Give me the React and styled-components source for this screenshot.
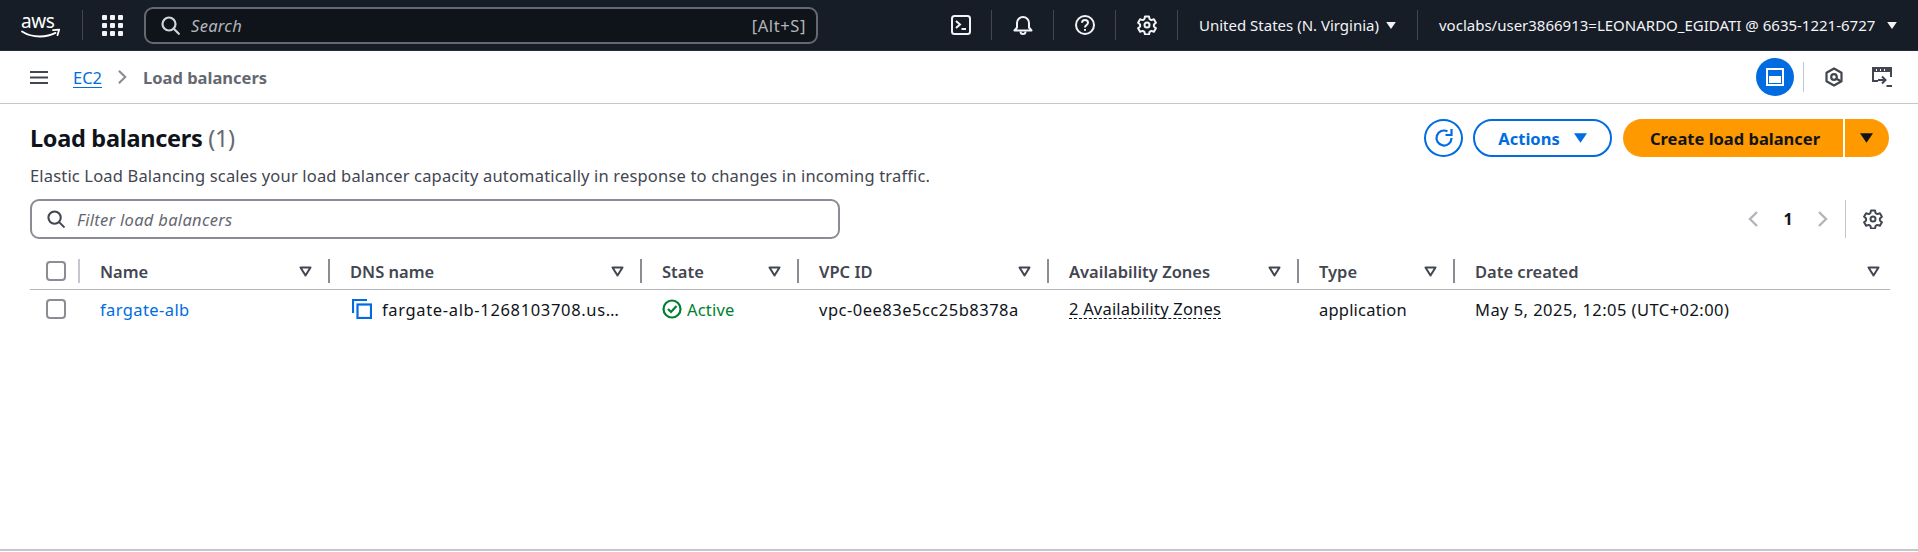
import React from "react";
import styled, { createGlobalStyle } from "styled-components";

const FONT = `"Noto Sans", "Open Sans", sans-serif`;
const COLUMNS = "50px 250px 312px 157px 250px 250px 156px 435px";

const GlobalStyle = createGlobalStyle`
  html, body {
    margin: 0;
    padding: 0;
    background: #fff;
  }
  * {
    box-sizing: border-box;
  }
`;

const Page = styled.div`
  display: flex;
  flex-direction: column;
  height: 552px;
  overflow: hidden;
  font-family: ${FONT};
  font-size: 16.5px;
  color: #0f141a;
`;

const TopNav = styled.header`
  display: flex;
  align-items: center;
  height: 51px;
  flex: none;
  background: #161d26;
  border-bottom: 1px solid #232b37;
  color: #fff;
`;

const LogoLink = styled.div`
  display: flex;
  align-items: center;
  width: 83px;
  height: 30px;
  padding-left: 21px;
  border-right: 1px solid #424650;
`;

const GridButton = styled.div`
  display: grid;
  grid-template-columns: repeat(3, 5px);
  grid-auto-rows: 5px;
  gap: 3px;
  margin: 0 21px 0 19px;
`;

const GridDot = styled.span`
  background: #f3f3f7;
  border-radius: 1px;
`;

const SearchBox = styled.div`
  display: flex;
  align-items: center;
  width: 674px;
  height: 37px;
  padding: 0 10px 0 15px;
  background: #0f141a;
  border: 2px solid #656871;
  border-radius: 9px;
`;

const SearchText = styled.span`
  margin-left: 11px;
  font-style: italic;
  font-size: 16.5px;
  letter-spacing: 0.3px;
  color: #b4b4bb;
`;

const Shortcut = styled.span`
  margin-left: auto;
  font-size: 16.5px;
  letter-spacing: 0.6px;
  color: #b4b4bb;
`;

const NavRight = styled.div`
  display: flex;
  align-items: center;
  margin-left: auto;
`;

const NavIcon = styled.div`
  display: flex;
  align-items: center;
  justify-content: center;
  width: 62px;
  height: 30px;
  border-right: 1px solid #424650;
`;

const NavMenu = styled.div`
  display: flex;
  align-items: center;
  justify-content: space-between;
  width: ${(p) => p.$width}px;
  height: 30px;
  padding: 0 21px 0 21px;
  font-size: 15px;
  color: #f3f3f7;
  white-space: nowrap;
  border-right: ${(p) => (p.$last ? "none" : "1px solid #424650")};
`;

const SubBar = styled.div`
  display: flex;
  align-items: center;
  height: 53px;
  flex: none;
  padding: 0 25px 0 30px;
  border-bottom: 1px solid #c6c6cd;
`;

const Crumbs = styled.nav`
  display: flex;
  align-items: center;
  margin-left: 25px;
`;

const CrumbLink = styled.a`
  color: #006ce0;
  font-size: 16.5px;
  text-decoration: underline;
  text-underline-offset: 3px;
`;

const CrumbChevron = styled.span`
  display: flex;
  margin: 0 15px;
`;

const CrumbCurrent = styled.span`
  color: #656871;
  font-size: 16.5px;
  font-weight: 700;
`;

const SubTools = styled.div`
  display: flex;
  align-items: center;
  margin-left: auto;
`;

const ActiveTool = styled.div`
  display: flex;
  align-items: center;
  justify-content: center;
  width: 38px;
  height: 38px;
  border-radius: 50%;
  background: #006ce0;
`;

const ToolDivider = styled.div`
  width: 1px;
  height: 30px;
  margin: 0 20px 0 9px;
  background: #c6c6cd;
`;

const Tool = styled.div`
  display: flex;
  margin-right: ${(p) => p.$gap || 0}px;
`;

const Content = styled.main`
  flex: 1;
  padding: 15px 28px 0 30px;
`;

const TitleRow = styled.div`
  display: flex;
  align-items: center;
  justify-content: space-between;
  height: 38px;
  margin-right: 1px;
`;

const Title = styled.h1`
  margin: 0;
  font-size: 23.5px;
  font-weight: 700;
  letter-spacing: -0.3px;
`;

const Count = styled.span`
  font-weight: 400;
  color: #656871;
`;

const Actions = styled.div`
  display: flex;
  align-items: center;
  gap: 10px;
`;

const RoundButton = styled.button`
  display: flex;
  align-items: center;
  justify-content: center;
  width: 39px;
  height: 38px;
  padding: 0;
  background: #fff;
  border: 2px solid #006ce0;
  border-radius: 50%;
`;

const OutlineButton = styled.button`
  display: flex;
  align-items: center;
  justify-content: center;
  gap: 14px;
  width: 139px;
  height: 38px;
  font: 700 16.5px ${FONT};
  color: #006ce0;
  background: #fff;
  border: 2px solid #006ce0;
  border-radius: 20px;
`;

const SplitButton = styled.div`
  display: flex;
  height: 38px;
  gap: 2px;
  margin-left: 1px;
`;

const PrimaryButton = styled.button`
  width: 220px;
  padding-left: 10px;
  font: 700 16.5px ${FONT};
  color: #0f141a;
  background: #ff9900;
  border: none;
  border-radius: 20px 0 0 20px;
`;

const CaretButton = styled.button`
  display: flex;
  align-items: center;
  justify-content: center;
  width: 44px;
  padding: 0 2px 0 0;
  background: #ff9900;
  border: none;
  border-radius: 0 20px 20px 0;
`;

const Description = styled.p`
  margin: 7px 0 0;
  line-height: 23px;
  font-size: 16.5px;
  letter-spacing: 0.17px;
  color: #424650;
`;

const FilterRow = styled.div`
  display: flex;
  align-items: center;
  justify-content: space-between;
  margin-top: 12px;
`;

const FilterBox = styled.div`
  display: flex;
  align-items: center;
  gap: 12px;
  width: 810px;
  height: 40px;
  padding: 0 15px;
  border: 2px solid #8c8c94;
  border-radius: 9px;
`;

const FilterText = styled.span`
  font-style: italic;
  font-size: 16.5px;
  letter-spacing: 0.3px;
  color: #656871;
`;

const Pager = styled.div`
  display: flex;
  align-items: center;
  padding-right: 7px;
`;

const PageNumber = styled.span`
  width: 58px;
  text-align: center;
  font-size: 16px;
  font-weight: 700;
`;

const PagerDivider = styled.div`
  width: 1px;
  height: 38px;
  margin: 0 17px 0 16px;
  background: #c6c6cd;
`;

const HeadRow = styled.div`
  display: grid;
  grid-template-columns: ${COLUMNS};
  align-items: center;
  height: 37px;
  margin-top: 14px;
  border-bottom: 1px solid #b4b4bb;
`;

const HeadCell = styled.div`
  display: flex;
  align-items: center;
  justify-content: space-between;
  height: 24px;
  padding: 0 ${(p) => (p.$last ? 10 : 16)}px 0 20px;
  font-size: 16.5px;
  font-weight: 600;
  color: #424650;
  border-right: ${(p) => (p.$last ? "none" : "2px solid #8c8c94")};
`;

const CheckCell = styled.div`
  display: flex;
  align-items: center;
  height: 24px;
  padding-left: 16px;
  border-right: ${(p) => (p.$head ? "2px solid #c6c6cd" : "none")};
`;

const Checkbox = styled.span`
  width: 20px;
  height: 20px;
  border: 2px solid #8c8c94;
  border-radius: 4px;
`;

const BodyRow = styled.div`
  display: grid;
  grid-template-columns: ${COLUMNS};
  align-items: center;
  height: 38px;
`;

const BodyCell = styled.div`
  display: flex;
  align-items: center;
  gap: ${(p) => p.$gap || 0}px;
  min-width: 0;
  padding-left: ${(p) => p.$left || 20}px;
  font-size: 16.5px;
  letter-spacing: ${(p) => p.$track || 0.2}px;
  white-space: nowrap;
  color: ${(p) => p.$color || "#0f141a"};
`;

const DottedText = styled.span`
  border-bottom: 1px dashed #0f141a;
  line-height: 19px;
`;

const BottomRule = styled.div`
  flex: none;
  height: 3px;
  border-top: 2px solid #c6c6cd;
  background: #fff;
`;

const AwsLogo = () => (
  <svg width="42" height="37" viewBox="0 -6 42 37" style={{ flex: "none" }}>
    <text x="0" y="14.5" fontFamily={FONT} fontSize="19" fill="#fff" letterSpacing="-0.4">aws</text>
    <path d="M1 18.5c5.500 3.600 11.500 5 18 5 5.500 0 11-1.200 15.500-3.600" fill="none" stroke="#fff" strokeWidth="1.800" strokeLinecap="round" />
    <path d="M32 17.200l6.200-.6-1.700 5.600" fill="none" stroke="#fff" strokeWidth="1.800" strokeLinecap="round" strokeLinejoin="round" />
  </svg>
);

const SearchIcon = ({ color, size = 19 }) => (
  <svg width={size} height={size} viewBox="0 0 19 19" fill="none" stroke={color} strokeWidth="2.200">
    <circle cx="8" cy="8" r="6.500" />
    <path d="M12.800 12.800l5 5" strokeLinecap="round" />
  </svg>
);

const Gear = ({ color, size = 20 }) => (
  <svg width={size} height={size} viewBox="0 0 20 20" fill="none" stroke={color} strokeWidth="2" strokeLinejoin="round">
    <path d="M8 1.500h4l.6 2.600 1.700 1 2.600-.8 2 3.400-2 1.800v2l2 1.800-2 3.400-2.600-.8-1.700 1-.6 2.600H8l-.6-2.600-1.700-1-2.600.8-2-3.400 2-1.800v-2l-2-1.800 2-3.400 2.600.8 1.700-1z" />
    <circle cx="10" cy="10" r="2.500" />
  </svg>
);

const Caret = ({ color, w = 11, h = 8 }) => (
  <svg width={w} height={h} viewBox="0 0 11 8" style={{ flex: "none" }}>
    <path d="M0 0h11L5.500 8z" fill={color} />
  </svg>
);

const SortIcon = () => (
  <svg width="13" height="11" viewBox="0 0 13 11" fill="none" stroke="#424650" strokeWidth="2" strokeLinejoin="round">
    <path d="M1.500 1.500h10L6.500 9.500z" />
  </svg>
);

const Chevron = ({ dir, color, w = 12, h = 20 }) => (
  <svg width={w} height={h} viewBox="0 0 12 20" fill="none" stroke={color} strokeWidth="2.400">
    <path d={dir === "left" ? "M10 3L3 10l7 7" : "M2 3l7 7-7 7"} />
  </svg>
);

const columns = ["Name", "DNS name", "State", "VPC ID", "Availability Zones", "Type", "Date created"];

export default function App() {
  return (
    <Page>
      <GlobalStyle />
      <TopNav>
        <LogoLink>
          <AwsLogo />
        </LogoLink>
        <GridButton>
          {Array.from({ length: 9 }).map((_, i) => (
            <GridDot key={i} />
          ))}
        </GridButton>
        <SearchBox>
          <SearchIcon color="#d1d5db" />
          <SearchText>Search</SearchText>
          <Shortcut>[Alt+S]</Shortcut>
        </SearchBox>
        <NavRight>
          <NavIcon>
            <svg width="20" height="20" viewBox="0 0 20 20" fill="none" stroke="#f3f3f7" strokeWidth="2">
              <rect x="1" y="1" width="18" height="18" rx="2.500" />
              <path d="M5 6l4 3.500L5 13M10.500 14H15" />
            </svg>
          </NavIcon>
          <NavIcon>
            <svg width="20" height="20" viewBox="0 0 20 20" fill="none" stroke="#f3f3f7" strokeWidth="2" strokeLinejoin="round">
              <path d="M1.500 15.500h17l-2.500-3V8a6 6 0 0 0-12 0v4.500z" />
              <path d="M7.500 16.500c0 1.500 1 2.500 2.500 2.500s2.500-1 2.500-2.500" />
            </svg>
          </NavIcon>
          <NavIcon>
            <svg width="20" height="20" viewBox="0 0 20 20" fill="none" stroke="#f3f3f7" strokeWidth="2">
              <circle cx="10" cy="10" r="9" />
              <path d="M7 7.800C7 6 8.300 5 10 5s3 1.100 3 2.700c0 2.300-3 2.300-3 4.800" />
              <path d="M10 14v1.800" />
            </svg>
          </NavIcon>
          <NavIcon>
            <Gear color="#f3f3f7" />
          </NavIcon>
          <NavMenu $width={240}>
            United States (N. Virginia)
            <Caret color="#f3f3f7" w={10} h={7} />
          </NavMenu>
          <NavMenu $last $width={500}>
            voclabs/user3866913=LEONARDO_EGIDATI @ 6635-1221-6727
            <Caret color="#f3f3f7" w={10} h={7} />
          </NavMenu>
        </NavRight>
      </TopNav>

      <SubBar>
        <svg width="18" height="15" viewBox="0 0 18 15" fill="none" stroke="#424650" strokeWidth="2.200">
          <path d="M0 2h18M0 7.500h18M0 13h18" />
        </svg>
        <Crumbs>
          <CrumbLink>EC2</CrumbLink>
          <CrumbChevron>
            <Chevron dir="right" color="#8c8c94" w={11} h={18} />
          </CrumbChevron>
          <CrumbCurrent>Load balancers</CrumbCurrent>
        </Crumbs>
        <SubTools>
          <ActiveTool>
            <svg width="20" height="20" viewBox="0 0 20 20" fill="none" stroke="#fff" strokeWidth="2">
              <rect x="2" y="2" width="16" height="16" />
              <rect x="4" y="9" width="12" height="7" fill="#fff" stroke="none" />
            </svg>
          </ActiveTool>
          <ToolDivider />
          <Tool $gap={27}>
            <svg width="20" height="20" viewBox="0 0 20 20" fill="none" stroke="#424650" strokeWidth="2.200" strokeLinejoin="round">
              <path d="M10 1.500l7.500 4.200v8.600L10 18.500l-7.500-4.200V5.700z" />
              <circle cx="10" cy="10" r="2.800" />
              <path d="M12 11.500l4.500 2.500" />
            </svg>
          </Tool>
          <Tool>
            <svg width="22" height="22" viewBox="0 0 22 22" fill="none" stroke="#424650" strokeWidth="2">
              <path d="M7 15H2V2h18v9" />
              <path d="M2 3h18v3H2z" fill="#424650" stroke="none" />
              <path d="M5 4h1M9 4h1M13 4h1" stroke="#fff" />
              <path d="M7 14h7M11 10.500L14.500 14 11 17.500M15.500 20H21" />
            </svg>
          </Tool>
        </SubTools>
      </SubBar>

      <Content>
        <TitleRow>
          <Title>
            Load balancers <Count>(1)</Count>
          </Title>
          <Actions>
            <RoundButton>
              <svg width="22" height="22" viewBox="0 0 22 22" fill="none" stroke="#006ce0" strokeWidth="2.200">
                <path d="M18.500 11A7.500 7.500 0 1 1 14.500 4.400" />
                <path d="M18.500 2v6h-6" />
              </svg>
            </RoundButton>
            <OutlineButton>
              Actions
              <Caret color="#006ce0" w={13} h={10} />
            </OutlineButton>
            <SplitButton>
              <PrimaryButton>Create load balancer</PrimaryButton>
              <CaretButton>
                <Caret color="#0f141a" w={13} h={10} />
              </CaretButton>
            </SplitButton>
          </Actions>
        </TitleRow>
        <Description>
          Elastic Load Balancing scales your load balancer capacity automatically in response to changes in incoming traffic.
        </Description>

        <FilterRow>
          <FilterBox>
            <SearchIcon color="#424650" size={18} />
            <FilterText>Filter load balancers</FilterText>
          </FilterBox>
          <Pager>
            <Chevron dir="left" color="#b4b4bb" />
            <PageNumber>1</PageNumber>
            <Chevron dir="right" color="#b4b4bb" />
            <PagerDivider />
            <Gear color="#424650" />
          </Pager>
        </FilterRow>

        <HeadRow>
          <CheckCell $head>
            <Checkbox />
          </CheckCell>
          {columns.map((name, i) => (
            <HeadCell key={name} $last={i === columns.length - 1}>
              {name}
              <SortIcon />
            </HeadCell>
          ))}
        </HeadRow>
        <BodyRow>
          <CheckCell>
            <Checkbox />
          </CheckCell>
          <BodyCell $color="#006ce0" $track={0.4}>fargate-alb</BodyCell>
          <BodyCell $left={22} $gap={10} $track={0.65}>
            <svg width="20" height="20" viewBox="0 0 20 20" fill="none" stroke="#006ce0" strokeWidth="2.200" style={{ flex: "none" }}>
              <path d="M1 14V1h14" />
              <rect x="5.500" y="5.500" width="13.500" height="13.500" />
            </svg>
            fargate-alb-1268103708.us…
          </BodyCell>
          <BodyCell $color="#00802f" $gap={5}>
            <svg width="20" height="20" viewBox="0 0 20 20" fill="none" stroke="#00802f" strokeWidth="2.200" style={{ flex: "none" }}>
              <circle cx="10" cy="10" r="8.500" />
              <path d="M6 10l3 3 5.500-6" />
            </svg>
            Active
          </BodyCell>
          <BodyCell $track={0.5}>vpc-0ee83e5cc25b8378a</BodyCell>
          <BodyCell>
            <DottedText>2 Availability Zones</DottedText>
          </BodyCell>
          <BodyCell>application</BodyCell>
          <BodyCell $track={0.45}>May 5, 2025, 12:05 (UTC+02:00)</BodyCell>
        </BodyRow>
      </Content>
      <BottomRule />
    </Page>
  );
}
